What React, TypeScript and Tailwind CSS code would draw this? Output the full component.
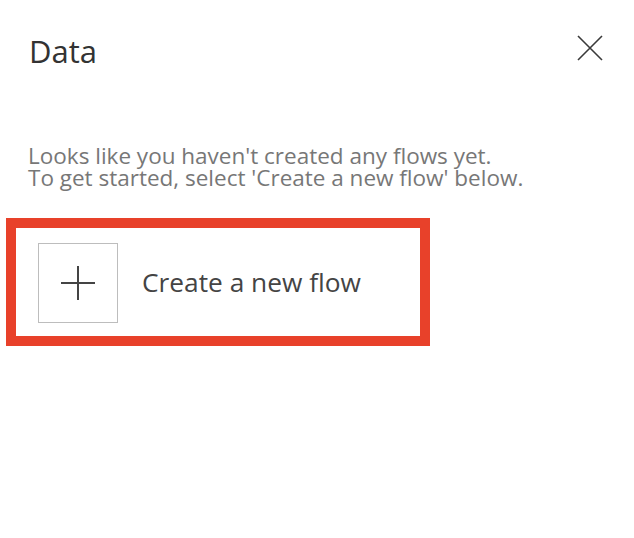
export default function App() {
	return (
		<div
			className="w-[634px] h-[538px] bg-white relative"
			style={{ fontFamily: '"Open Sans", "Noto Sans", sans-serif' }}
		>
			<div className="flex items-start justify-between pl-[29px] pr-[31px] pt-[31px]">
				<h1 className="text-[31px] leading-[40px] text-[#333333]">Data</h1>
				<button className="mt-[4px] text-[#333333]">
					<svg width="26" height="26" viewBox="0 0 26 26">
						<path d="M1 1L25 25M25 1L1 25" stroke="#3a3a3a" strokeWidth="1.6" />
					</svg>
				</button>
			</div>

			<p className="mt-[74px] pl-[28px] text-[22.5px] leading-[22px] text-[#777777]">
				Looks like you haven't created any flows yet.
				<br />
				To get started, select 'Create a new flow' below.
			</p>

			{/* Highlighted action */}
			<div className="mt-[29px] ml-[6px] w-[424px] border-[10px] border-[#e8412a] pt-[15px] pb-[13px] pl-[22px]">
				<div className="flex items-center gap-[24px]">
					<div className="w-[80px] h-[80px] border border-[#bdbdbd] flex items-center justify-center">
						<svg width="34" height="34" viewBox="0 0 34 34">
							<path d="M17 0v34M0 17h34" stroke="#444444" strokeWidth="2" />
						</svg>
					</div>
					<span className="text-[26.3px] text-[#444444]">Create a new flow</span>
				</div>
			</div>
		</div>
	);
}
